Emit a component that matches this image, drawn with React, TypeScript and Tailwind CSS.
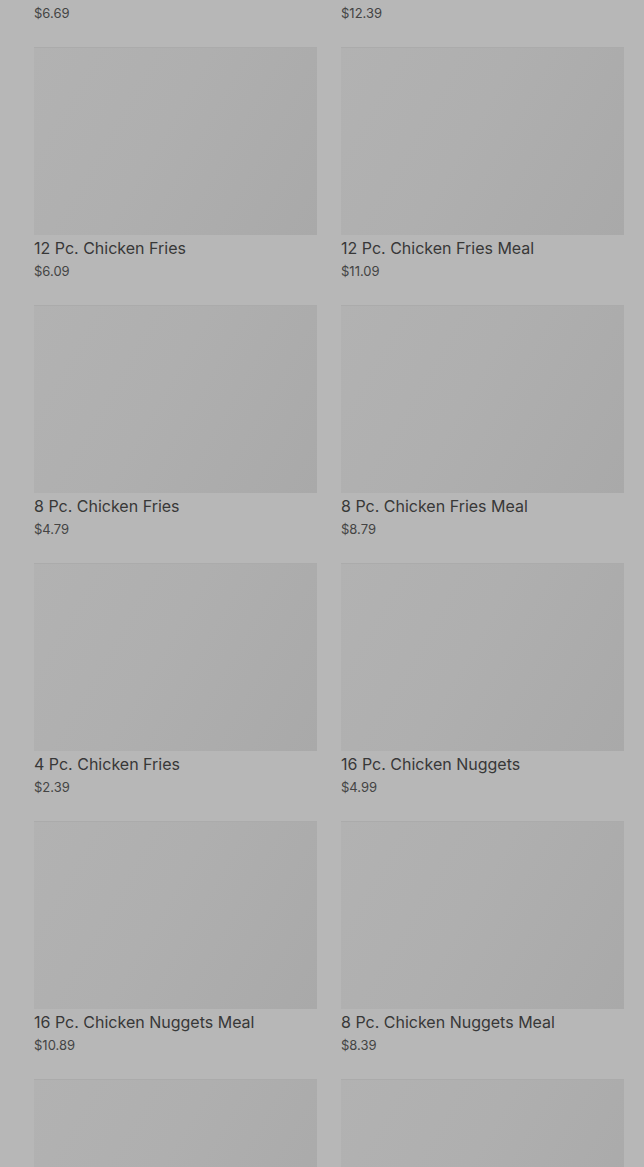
const ITEMS = [
  { name: '8 Pc. Chicken Fries Combo', price: '$6.69' },
  { name: '12 Pc. Chicken Nuggets Meal', price: '$12.39' },
  { name: '12 Pc. Chicken Fries', price: '$6.09' },
  { name: '12 Pc. Chicken Fries Meal', price: '$11.09' },
  { name: '8 Pc. Chicken Fries', price: '$4.79' },
  { name: '8 Pc. Chicken Fries Meal', price: '$8.79' },
  { name: '4 Pc. Chicken Fries', price: '$2.39' },
  { name: '16 Pc. Chicken Nuggets', price: '$4.99' },
  { name: '16 Pc. Chicken Nuggets Meal', price: '$10.89' },
  { name: '8 Pc. Chicken Nuggets Meal', price: '$8.39' },
  { name: '4 Pc. Chicken Nuggets', price: '$1.99' },
  { name: '10 Pc. Chicken Nuggets', price: '$3.69' },
]

function MenuCard({ name, price }: { name: string; price: string }) {
  return (
    <div className='flex flex-col h-[258px]'>
      <div className='h-[188px] w-full bg-[linear-gradient(120deg,#b2b2b2_0%,#afafaf_45%,#a9a9a9_100%)] border-t border-[#ababab]' />
      <p className='mt-[1px] text-[16px] leading-[24px] text-[#383838]'>{name}</p>
      <p className='text-[13px] leading-[22px] text-[#444444]'>{price}</p>
    </div>
  )
}

export default function App() {
  return (
    <div className="h-[1167px] overflow-hidden bg-[#b7b7b7] font-['Inter','Roboto',sans-serif]">
      <div className='-mt-[211px] pl-[34px] pr-[20px] grid grid-cols-2 gap-x-[24px]'>
        {ITEMS.map((item) => (
          <MenuCard key={item.name} name={item.name} price={item.price} />
        ))}
      </div>
    </div>
  )
}
